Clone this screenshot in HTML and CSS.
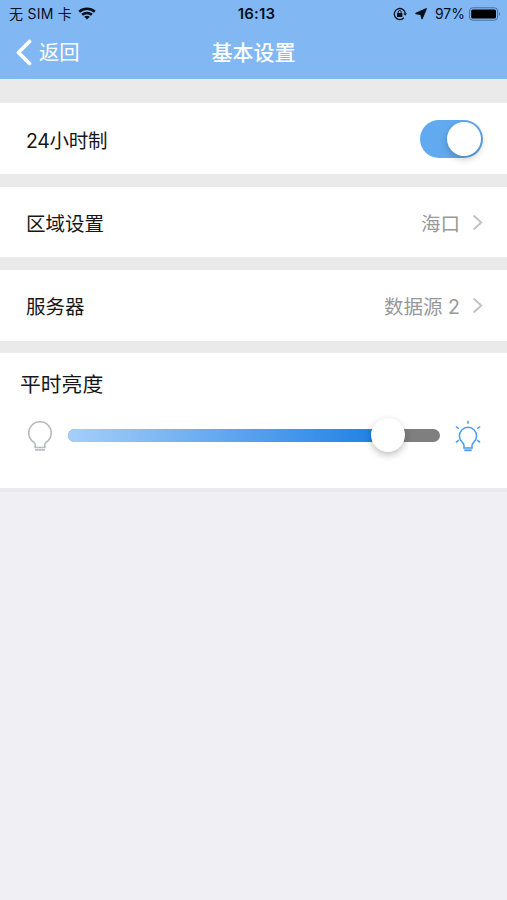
FILE: index.html
```
<!DOCTYPE html>
<html lang="zh-CN">
<head>
  <meta charset="UTF-8">
  <meta name="viewport" content="width=device-width, initial-scale=1">
  <title>基本设置</title>
  <link rel="stylesheet" href="styles.css">
</head>
<body>

  <header class="header">
    <div class="status-bar">
      <div class="status-left">
        <span>无 SIM 卡</span>
        <svg class="wifi" width="18" height="13" viewBox="0 0 18 13">
          <g fill="none" stroke="#06101c" stroke-width="2.5">
            <path d="M1.2 4.7C5.6.8 12.4.8 16.8 4.7"/>
            <path d="M4.1 7.8c2.8-2.5 7-2.5 9.8 0"/>
          </g>
          <path d="M9 12.4 6.2 9.7c1.6-1.4 4-1.4 5.6 0z" fill="#06101c"/>
        </svg>
      </div>
      <div class="status-time">16:13</div>
      <div class="status-right">
        <svg class="lock" width="14" height="14" viewBox="0 0 14 14">
          <path d="M10.9 10.7A5.5 5.5 0 1 1 12.2 6" fill="none" stroke="#06101c" stroke-width="1.3"/>
          <path d="M10.4 6.2h3.6l-1.8 2.6z" fill="#06101c"/>
          <rect x="4" y="6" width="5.4" height="4" rx=".5" fill="#06101c"/>
          <path d="M5.2 6.3V5.1a1.5 1.5 0 0 1 3 0v1.2" fill="none" stroke="#06101c"/>
        </svg>
        <svg class="location" width="12" height="12" viewBox="0 0 12 12">
          <path d="M11.2.8 7 10.6 5.9 6.4 1 5.5z" fill="#06101c" stroke="#06101c" stroke-width="1.4" stroke-linejoin="round"/>
        </svg>
        <span class="percent">97%</span>
        <svg class="battery" width="32" height="14" viewBox="0 0 32 14">
          <rect x=".6" y=".8" width="28" height="12.4" rx="3.2" fill="none" stroke="#4a6f98" stroke-width="1"/>
          <rect x="2.2" y="2.4" width="24.8" height="9.2" rx="1.6" fill="#000"/>
          <path d="M30.2 5v4c1.2-.5 1.2-3.5 0-4z" fill="#4a6f98"/>
        </svg>
      </div>
    </div>
    <div class="nav-bar">
      <a class="back" href="#">
        <svg width="17" height="27" viewBox="0 0 17 27">
          <path d="M14.5 2.5 3.5 13.5 14.5 24.5" fill="none" stroke="#fff" stroke-width="3.8" stroke-linecap="round" stroke-linejoin="round"/>
        </svg>
        <span class="back-text">返回</span>
      </a>
      <h1 class="title">基本设置</h1>
    </div>
  </header>

  <main class="settings">
    <div class="row">
      <span class="label label-time">24小时制</span>
      <div class="switch"><div class="switch-knob"></div></div>
    </div>

    <div class="row">
      <span class="label">区域设置</span>
      <span class="value">海口</span>
      <svg class="arrow" width="11" height="17" viewBox="0 0 11 17">
        <path d="m1.5 1.5 7.8 7-7.8 7" fill="none" stroke="#c2c2c5" stroke-width="1.9"/>
      </svg>
    </div>

    <div class="row">
      <span class="label">服务器</span>
      <span class="value">数据源 2</span>
      <svg class="arrow" width="11" height="17" viewBox="0 0 11 17">
        <path d="m1.5 1.5 7.8 7-7.8 7" fill="none" stroke="#c2c2c5" stroke-width="1.9"/>
      </svg>
    </div>

    <div class="brightness">
      <div class="brightness-title">平时亮度</div>
      <div class="slider-line">
        <svg class="bulb-off" width="26" height="32" viewBox="0 0 26 32">
          <g fill="none" stroke="#b6b8be" stroke-width="1.6">
            <path d="M8.2 27.5v-2.8c0-1.3-.5-1.8-1.6-2.5A11.2 11.2 0 1 1 19.4 22.2c-1.1.7-1.6 1.2-1.6 2.5v2.8z"/>
            <path d="M8 29.9h10"/>
          </g>
        </svg>
        <div class="track">
          <div class="track-fill" style="width: 86%"></div>
          <div class="thumb" style="left: 86%"></div>
        </div>
        <svg class="bulb-on" width="26" height="32" viewBox="0 0 26 32">
          <g fill="none" stroke="#4a9cf0" stroke-width="1.5">
            <path d="M9 28v-2.5c0-1.3-.6-2.1-1.7-3.1a8.6 8.6 0 1 1 11.4 0c-1.1 1-1.7 1.8-1.7 3.1V28z"/>
            <path d="M9.3 30.3h7.4" stroke-width="1.8"/>
            <path d="M13 .8v3M.9 6.5l2.9 2.1M25.1 6.5l-2.9 2.1M.9 22.3l2.9-2.1M25.1 22.3l-2.9-2.1"/>
          </g>
        </svg>
      </div>
    </div>
  </main>

</body>
</html>
```
FILE: styles.css
```
* {
  box-sizing: border-box;
}

html, body {
  margin: 0;
  padding: 0;
  height: 100%;
  overflow: hidden;
}

body {
  background-color: #efeff4;
  color: #161616;
  font-family: Inter, "Noto Sans CJK SC", sans-serif;
}

.header {
  height: 79.3px;
  background-color: #81b8f3;
}

.status-bar {
  display: grid;
  grid-template-columns: 1fr auto 1fr;
  align-items: center;
  height: 27px;
  padding: 0 6px 0 9px;
  font-size: 14px;
  line-height: 27px;
  color: #06101c;
}

.status-left,
.status-right {
  display: flex;
  align-items: center;
}

.status-left {
  letter-spacing: 0.25px;
}

.wifi {
  margin-left: 6px;
}

.status-time {
  padding-left: 3px;
  font-weight: 600;
  font-size: 15px;
  letter-spacing: 0.2px;
}

.status-right {
  justify-content: flex-end;
}

.location {
  margin: 0 8px;
}

.battery {
  margin-left: 4px;
}

.nav-bar {
  display: grid;
  grid-template-columns: 1fr auto 1fr;
  align-items: center;
  height: 50px;
  padding: 0 15px;
  color: #fff;
}

.back {
  display: flex;
  align-items: center;
  gap: 7px;
  color: #fff;
  font-size: 20.3px;
  font-weight: 400;
  line-height: 28px;
  text-decoration: none;
}

.back-text {
  padding-top: 2px;
}

.title {
  margin: 0;
  padding-top: 2px;
  font-size: 21px;
  font-weight: 500;
  line-height: 30px;
}

.settings {
  display: flex;
  flex-direction: column;
  gap: 12.4px;
  padding: 24.1px 0 4px;
  background-color: #eaeaea;
}

.row {
  display: flex;
  align-items: center;
  height: 70.8px;
  padding: 1px 24px 0 26px;
  background-color: #fff;
}

.label {
  flex: 1;
  font-size: 19.5px;
}

.label-time {
  letter-spacing: -0.3px;
}

.value {
  font-size: 19.5px;
  color: #98989b;
}

.arrow {
  margin-left: 12px;
}

.switch {
  display: flex;
  justify-content: flex-end;
  width: 63px;
  height: 38px;
  padding: 2px;
  border-radius: 19px;
  background-color: #62aaef;
}

.switch-knob {
  width: 34px;
  height: 34px;
  border-radius: 50%;
  background-color: #fff;
  box-shadow: 0 3px 7px rgba(0, 0, 0, 0.22);
}

.brightness {
  height: 134.8px;
  padding: 17px 26px 0 20px;
  background-color: #fff;
}

.brightness-title {
  font-size: 20.8px;
  line-height: 30px;
}

.slider-line {
  display: flex;
  align-items: center;
  height: 32px;
  margin-top: 20px;
  padding-left: 7px;
}

.track {
  position: relative;
  flex: 1;
  height: 13px;
  margin: 0 15px;
  border-radius: 7px;
  background-color: #7f7f7f;
}

.track-fill {
  height: 100%;
  border-radius: 7px 0 0 7px;
  background: linear-gradient(to right, #a6cffb, #1b7ee3);
}

.thumb {
  position: absolute;
  top: -11px;
  width: 34px;
  height: 34px;
  margin-left: -17px;
  border-radius: 50%;
  background-color: #fff;
  box-shadow: 0 3px 7px rgba(0, 0, 0, 0.25);
}
```
